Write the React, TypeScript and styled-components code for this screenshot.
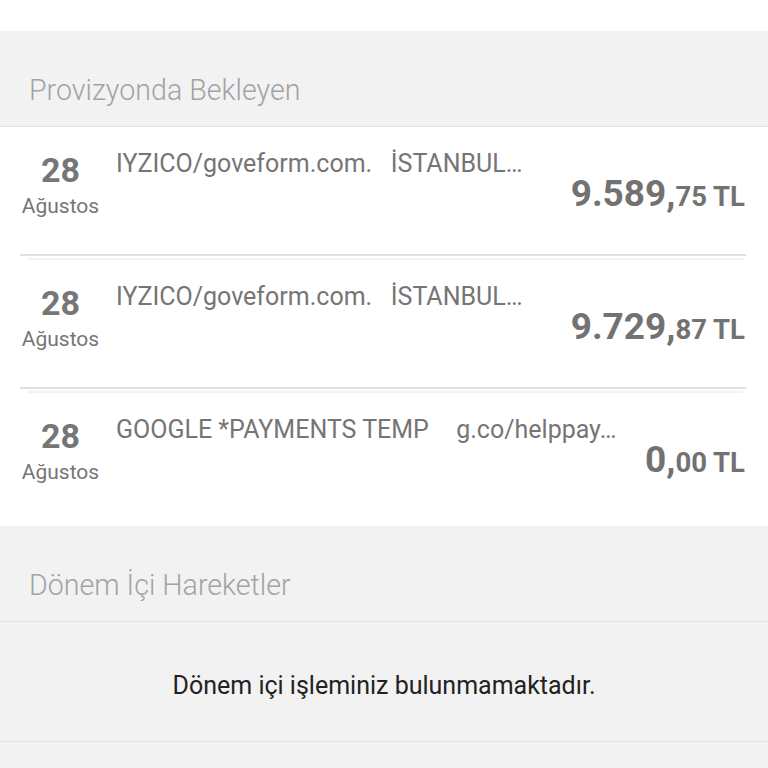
import React from "react";
import styled, { createGlobalStyle } from "styled-components";

const Global = createGlobalStyle`
  html, body { margin: 0; padding: 0; background: #f2f2f2; }
  body { font-family: Roboto, "Noto Sans", "Liberation Sans", sans-serif; }
  * { box-sizing: border-box; }
`;

const Page = styled.div`
  width: 768px;
  min-height: 768px;
  background: #f2f2f2;
  display: flex;
  flex-direction: column;
`;

const TopBar = styled.div`
  height: 31px;
  background: #ffffff;
`;

const SectionHeader = styled.div`
  height: 96px;
  display: flex;
  align-items: flex-end;
  padding: 0 29px 21px;
  border-bottom: 1px solid #e2e2e2;
  font-weight: 300;
  font-size: 28.6px;
  line-height: 30px;
  color: #a3a3a3;
`;

const List = styled.div`
  background: #ffffff;
  padding-bottom: 6px;
`;

const Row = styled.div`
  height: 127px;
  display: flex;
  padding: 26px 23px 0 10px;
`;

const DateCol = styled.div`
  width: 101px;
  display: flex;
  flex-direction: column;
  align-items: center;
  color: #767676;
`;

const Day = styled.div`
  font-size: 34px;
  line-height: 34px;
  font-weight: 700;
`;

const Month = styled.div`
  margin-top: 9px;
  font-size: 21px;
  line-height: 20px;
`;

const Main = styled.div`
  flex: 1;
  margin-left: 5px;
  margin-top: -1px;
  display: flex;
  flex-direction: column;
`;

const Desc = styled.div`
  font-size: 25px;
  line-height: 24px;
  color: #757575;
  white-space: pre;
`;

const Amount = styled.div`
  align-self: flex-end;
  color: #727272;
  font-weight: 700;
  line-height: 35px;
`;

const Whole = styled.span`
  font-size: 37px;
`;

const Frac = styled.span`
  font-size: 27.5px;
`;

const Separator = styled.div`
  position: relative;
  height: 6px;
  margin: 0 22px 0 20px;
  border-top: 2px solid #e0e0e0;
  &::after {
    content: "";
    position: absolute;
    left: 8px;
    right: 3px;
    top: 2px;
    height: 2px;
    background: #f1f1f1;
  }
`;

const Empty = styled.div`
  height: 120px;
  display: flex;
  align-items: center;
  justify-content: center;
  padding-top: 8px;
  border-bottom: 1px solid #e2e2e2;
  font-size: 25px;
  color: #222222;
`;

type Tx = { day: string; month: string; desc: string; whole: string; frac: string };

const txs: Tx[] = [
  { day: "28", month: "Ağustos", desc: "IYZICO/goveform.com.   İSTANBUL\u2026", whole: "9.589,", frac: "75 TL" },
  { day: "28", month: "Ağustos", desc: "IYZICO/goveform.com.   İSTANBUL\u2026", whole: "9.729,", frac: "87 TL" },
  { day: "28", month: "Ağustos", desc: "GOOGLE *PAYMENTS TEMP    \u200Ag.co/helppay\u2026", whole: "0,", frac: "00 TL" },
];

export default function App() {
  return (
    <Page>
      <Global />
      <TopBar />
      <SectionHeader>Provizyonda Bekleyen</SectionHeader>
      <List>
        {txs.map((t, i) => (
          <React.Fragment key={i}>
            {i > 0 && <Separator />}
            <Row>
              <DateCol>
                <Day>{t.day}</Day>
                <Month>{t.month}</Month>
              </DateCol>
              <Main>
                <Desc>{t.desc}</Desc>
                <Amount>
                  <Whole>{t.whole}</Whole>
                  <Frac>{t.frac}</Frac>
                </Amount>
              </Main>
            </Row>
          </React.Fragment>
        ))}
      </List>
      <SectionHeader>Dönem İçi Hareketler</SectionHeader>
      <Empty>Dönem içi işleminiz bulunmamaktadır.</Empty>
    </Page>
  );
}
